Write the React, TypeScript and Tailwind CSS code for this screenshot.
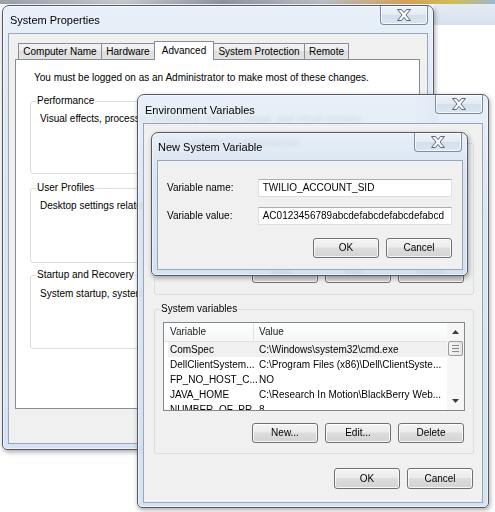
import React from "react";

const FONT = "font-['Liberation_Sans',Arial,sans-serif]";

function XGlyph() {
  return (
    <svg width="14" height="12" viewBox="0 0 14 12">
      <polygon
        points="0.5,0.5 4.5,0.5 7,3.6 9.5,0.5 13.5,0.5 9,6 13.5,11.5 9.5,11.5 7,8.4 4.5,11.5 0.5,11.5 5,6"
        fill="#f7f9fc"
        stroke="#5d6675"
        strokeWidth="1"
        strokeLinejoin="round"
      />
    </svg>
  );
}

function CloseBtn() {
  return (
    <div className="absolute top-0 right-[5px] flex h-[19px] w-[48px] items-center justify-center rounded-b-[4px] border border-t-0 border-[#7d8ca2] bg-[linear-gradient(180deg,#eef3f9,#e2eaf4_50%,#d4dfec_50%,#dbe5f1)] shadow-[inset_0_0_0_1px_rgba(255,255,255,0.7)]">
      <XGlyph />
    </div>
  );
}

function Frame({
  cls,
  title,
  titleCls,
  children,
}: {
  cls: string;
  title: string;
  titleCls: string;
  children: React.ReactNode;
}) {
  return (
    <div
      className={`absolute flex flex-col rounded-t-[7px] rounded-b-[5px] border border-[#555b66] bg-[linear-gradient(180deg,rgba(230,238,248,0.9),rgba(214,227,242,0.9)_30%,rgba(210,224,241,0.9))] backdrop-blur-[2px] shadow-[inset_0_0_0_1px_rgba(255,255,255,0.55),1px_2px_5px_rgba(0,0,0,0.35)] ${cls}`}
    >
      <div className={`flex shrink-0 items-center text-[11px] leading-none text-black ${titleCls}`}>{title}</div>
      <CloseBtn />
      <div className="relative flex-1 overflow-hidden border border-[#99a7ba] bg-[#f0f0f0]">{children}</div>
    </div>
  );
}

function Btn({ children, cls }: { children?: React.ReactNode; cls: string }) {
  return (
    <div
      className={`flex shrink-0 items-center justify-center rounded-[3px] border border-[#707070] bg-[linear-gradient(180deg,#f4f4f4_0%,#ebebeb_45%,#dddddd_50%,#d3d3d3_100%)] text-[10px] leading-none text-black shadow-[inset_0_0_0_1px_rgba(255,255,255,0.8)] ${cls}`}
    >
      {children}
    </div>
  );
}

function Group({ label, cls, children }: { label: string; cls: string; children?: React.ReactNode }) {
  return (
    <fieldset className={`shrink-0 rounded-[3px] border border-[#d5dfe5] ${cls}`}>
      <legend className="px-[1px] text-[10px] leading-[12px] text-black">{label}</legend>
      {children}
    </fieldset>
  );
}

function Tab({ children, cls, sel }: { children: React.ReactNode; cls: string; sel?: boolean }) {
  return sel ? (
    <div
      className={`-mb-px -ml-px flex h-[19px] items-center justify-center border border-b-0 border-[#898c95] bg-white text-[10px] leading-none ${cls}`}
    >
      {children}
    </div>
  ) : (
    <div
      className={`-ml-px flex h-[16px] items-center justify-center border border-b-0 border-[#898c95] bg-[linear-gradient(180deg,#f3f3f3,#ebebeb_50%,#dedede_50%,#e3e3e3)] text-[10px] leading-none ${cls}`}
    >
      {children}
    </div>
  );
}

function Input({ value }: { value: string }) {
  return (
    <div className="flex h-[18px] w-[195px] items-center border border-[#dbdfe6] border-t-[#abadb3] bg-white pl-[4px] text-[10px] leading-none">
      {value}
    </div>
  );
}

function Scrollbar() {
  return (
    <div className="flex w-[17px] shrink-0 flex-col bg-[#f6f6f6]">
      <div className="flex h-[18px] items-center justify-center">
        <svg width="7" height="4" viewBox="0 0 7 4">
          <polygon points="3.5,0 7,4 0,4" fill="#3b3b3b" />
        </svg>
      </div>
      <div className="mx-[1px] flex h-[15px] flex-col items-center justify-center gap-[2px] rounded-[2px] border border-[#9b9b9b] bg-[linear-gradient(90deg,#f3f3f3,#e6e6e6)]">
        <div className="h-px w-[7px] bg-[#8a8a8a]" />
        <div className="h-px w-[7px] bg-[#8a8a8a]" />
        <div className="h-px w-[7px] bg-[#8a8a8a]" />
      </div>
      <div className="flex-1" />
      <div className="flex h-[18px] items-center justify-center">
        <svg width="7" height="4" viewBox="0 0 7 4">
          <polygon points="0,0 7,0 3.5,4" fill="#3b3b3b" />
        </svg>
      </div>
    </div>
  );
}

const rows: [string, string, boolean][] = [
  ["ComSpec", "C:\\Windows\\system32\\cmd.exe", true],
  ["DellClientSystem...", "C:\\Program Files (x86)\\Dell\\ClientSyste...", false],
  ["FP_NO_HOST_C...", "NO", false],
  ["JAVA_HOME", "C:\\Research In Motion\\BlackBerry Web...", false],
  ["NUMBER_OF_PR...", "8", false],
];

export default function App() {
  return (
    <div className={`relative h-[512px] w-[495px] overflow-hidden bg-white ${FONT}`}>
      {/* desktop bits */}
      <div className="h-[4px] w-full bg-[linear-gradient(90deg,#9aa0aa,#c5c9d0_25%,#8e949e_45%,#b9bec6_65%,#d7a15c_82%,#cdbf55_92%,#9fb5cc)]" />
      <div className="ml-[434px] h-[21px] bg-[linear-gradient(180deg,#e4ebf4,#d7e1ee)]" />

      {/* System Properties */}
      <Frame
        cls="left-[2px] top-[5px] h-[445px] w-[432px] px-[5px] pb-[5px]"
        titleCls="h-[27px] pl-[2px] pt-[2px]"
        title="System Properties"
      >
        <div className="flex h-full flex-col pl-[6px] pt-[7px]">
          <div className="relative z-10 flex h-[18px] items-end pl-[4px]">
            <Tab cls="w-[84px]">Computer Name</Tab>
            <Tab cls="w-[54px]">Hardware</Tab>
            <Tab cls="w-[60px]" sel>
              Advanced
            </Tab>
            <Tab cls="w-[92px]">System Protection</Tab>
            <Tab cls="w-[45px]">Remote</Tab>
          </div>
          <div className="flex h-[350px] w-[405px] flex-col border border-[#898c95] bg-white pl-[14px] pt-[12px]">
            <p className="pl-[4px] text-[10px] leading-[12px] text-black">
              You must be logged on as an Administrator to make most of these changes.
            </p>
            <Group label="Performance" cls="mt-[11px] h-[79px] w-[375px] pl-[5px]">
              <div className="pl-[4px] pt-[6px] text-[10px] leading-[12px]">
                Visual effects, processor scheduling, memory usage, and virtual memory
              </div>
            </Group>
            <Group label="User Profiles" cls="mt-[8px] h-[81px] w-[375px] pl-[5px]">
              <div className="pl-[4px] pt-[6px] text-[10px] leading-[12px]">
                Desktop settings related to your logon
              </div>
            </Group>
            <Group label="Startup and Recovery" cls="mt-[6px] h-[80px] w-[375px] pl-[5px]">
              <div className="pl-[4px] pt-[7px] text-[10px] leading-[12px]">
                System startup, system failure, and debugging information
              </div>
            </Group>
          </div>
        </div>
      </Frame>

      {/* Environment Variables */}
      <Frame
        cls="left-[137px] top-[94px] h-[414px] w-[352px] px-[5px] pb-[4px]"
        titleCls="h-[28px] pl-[2px] pt-[3px]"
        title="Environment Variables"
      >
        <div className="flex h-full flex-col pt-[13px]">
          <Group label="User variables for Administrator" cls="ml-[10px] h-[158px] w-[320px] pl-[5px]">
            <div className="ml-[3px] mt-[7px] h-[94px] w-[302px] border border-[#828790] bg-white" />
            <div className="mt-[13px] flex justify-end gap-[7px] pr-[9px]">
              <Btn cls="h-[20px] w-[66px]">New...</Btn>
              <Btn cls="h-[20px] w-[66px]">Edit...</Btn>
              <Btn cls="h-[20px] w-[66px]">Delete</Btn>
            </div>
          </Group>
          <Group label="System variables" cls="ml-[10px] mt-[8px] h-[151px] w-[320px] pl-[5px]">
            <div className="ml-[3px] mt-[7px] flex h-[89px] w-[302px] border border-[#828790] bg-white">
              <div className="flex-1 overflow-hidden">
                <div className="flex h-[19px] border-b border-[#e3e3e3] bg-[linear-gradient(180deg,#ffffff,#f5f6f7)] text-[10px] leading-none text-[#222]">
                  <div className="flex w-[90px] items-center border-r border-[#e2e3e4] pl-[6px]">Variable</div>
                  <div className="flex items-center pl-[5px]">Value</div>
                </div>
                {rows.map(([n, v, sel]) => (
                  <div
                    key={n}
                    className={`ml-[4px] flex h-[15px] items-center whitespace-nowrap text-[10px] leading-none text-black ${sel ? "bg-[#f0f0f0]" : ""}`}
                  >
                    <div className="w-[86px] shrink-0 pl-[2px]">{n}</div>
                    <div className="pl-[5px]">{v}</div>
                  </div>
                ))}
              </div>
              <Scrollbar />
            </div>
            <div className="mt-[12px] flex justify-end gap-[7px] pr-[9px]">
              <Btn cls="h-[20px] w-[66px]">New...</Btn>
              <Btn cls="h-[20px] w-[66px]">Edit...</Btn>
              <Btn cls="h-[20px] w-[66px]">Delete</Btn>
            </div>
          </Group>
          <div className="mt-[14px] flex justify-end gap-[7px] pr-[9px]">
            <Btn cls="h-[21px] w-[66px]">OK</Btn>
            <Btn cls="h-[21px] w-[66px]">Cancel</Btn>
          </div>
        </div>
      </Frame>

      {/* New System Variable */}
      <Frame
        cls="left-[151px] top-[132px] h-[144px] w-[317px] pl-[5px] pr-[4px] pb-[5px] border-[#3f444d]"
        titleCls="h-[27px] pl-[1px] pt-[2px]"
        title="New System Variable"
      >
        <div className="flex flex-col pl-[9px] pr-[10px] pt-[18px]">
          <div className="flex h-[18px] items-center">
            <span className="w-[91px] text-[10px] leading-none">Variable name:</span>
            <Input value="TWILIO_ACCOUNT_SID" />
          </div>
          <div className="mt-[10px] flex h-[18px] items-center">
            <span className="w-[91px] text-[10px] leading-none">Variable value:</span>
            <Input value="AC0123456789abcdefabcdefabcdefabcd" />
          </div>
          <div className="mt-[13px] flex justify-end gap-[7px]">
            <Btn cls="h-[20px] w-[66px]">OK</Btn>
            <Btn cls="h-[20px] w-[66px]">Cancel</Btn>
          </div>
        </div>
      </Frame>
    </div>
  );
}
